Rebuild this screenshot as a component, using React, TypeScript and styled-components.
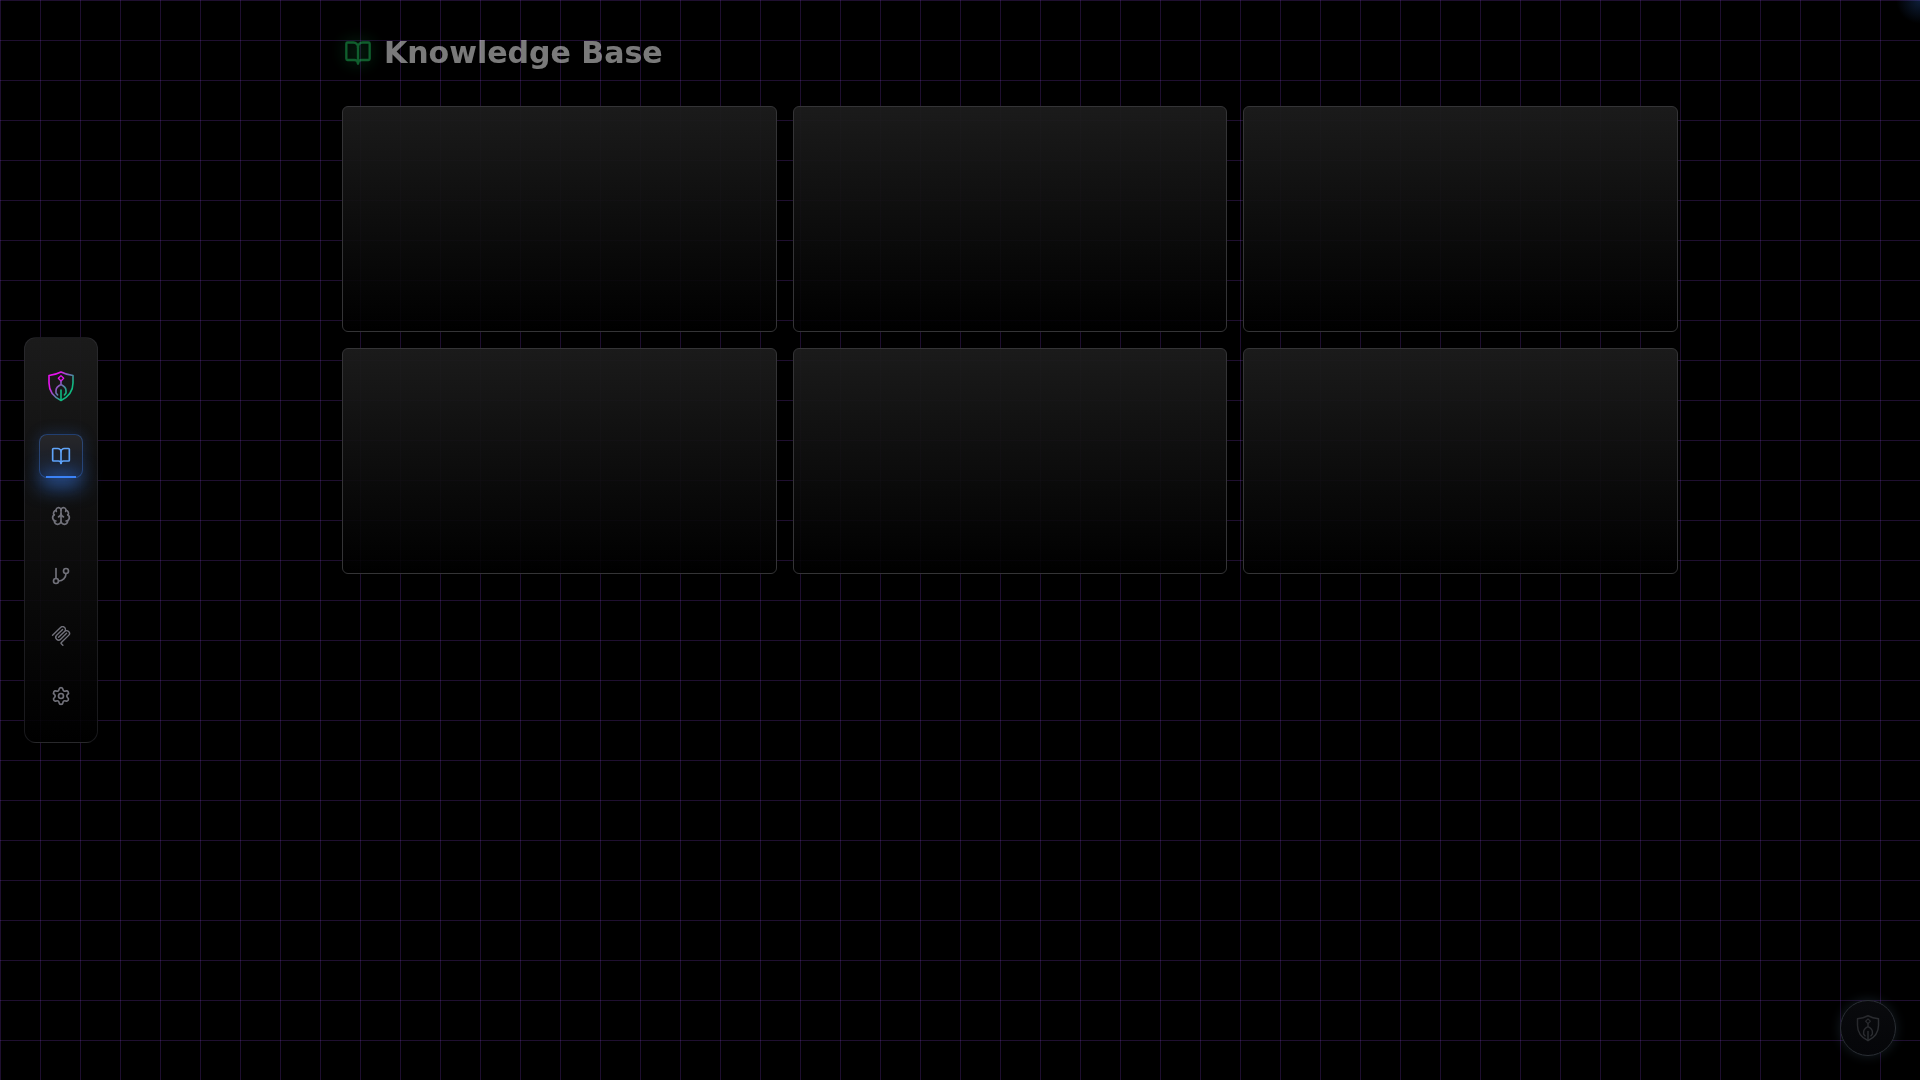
import React from 'react';
import styled, { createGlobalStyle, css } from 'styled-components';
import { BookOpen, Brain, GitBranch, Settings } from 'lucide-react';

const GlobalStyle = createGlobalStyle`
  *, *::before, *::after { box-sizing: border-box; }
  body {
    margin: 0;
    background: #000;
    font-family: "DejaVu Sans", sans-serif;
  }
`;

const Page = styled.div`
  position: relative;
  min-height: 100vh;
  padding-left: 100px;
  overflow: hidden;
  background-color: #000;
  background-image:
    linear-gradient(to right, rgba(155, 75, 240, 0.2) 1px, transparent 1px),
    linear-gradient(to bottom, rgba(155, 75, 240, 0.2) 1px, transparent 1px);
  background-size: 40px 40px;
`;

const CornerGlow = styled.div`
  position: absolute;
  top: -24px;
  right: -24px;
  width: 48px;
  height: 48px;
  background: radial-gradient(circle, rgba(59, 130, 246, 0.24), transparent 70%);
`;

const Sidebar = styled.nav`
  position: fixed;
  top: 50%;
  left: 24px;
  transform: translateY(-50%);
  display: flex;
  flex-direction: column;
  align-items: center;
  gap: 24px;
  padding: 24px 12px;
  border: 1px solid rgba(63, 63, 70, 0.4);
  border-radius: 12px;
  background: linear-gradient(to bottom, rgba(28, 28, 28, 0.95), rgba(0, 0, 0, 0.85));
`;

const LogoLink = styled.a`
  display: flex;
  padding: 8px;
`;

const NavList = styled.div`
  display: flex;
  flex-direction: column;
  gap: 16px;
`;

const NavButton = styled.button<{ $active?: boolean }>`
  position: relative;
  display: flex;
  align-items: center;
  justify-content: center;
  width: 44px;
  height: 44px;
  padding: 0;
  border: 1px solid transparent;
  border-radius: 8px;
  background: none;
  color: #71717a;
  cursor: pointer;
  ${({ $active }) =>
    $active &&
    css`
      color: #60a5fa;
      border-color: rgba(59, 130, 246, 0.36);
      background: linear-gradient(to bottom, #27272a, #141a26);
      box-shadow: 0 0 15px rgba(59, 130, 246, 0.24);
      &::before {
        content: "";
        position: absolute;
        inset: auto 6px -1px;
        height: 2px;
        background: #3b82f6;
        box-shadow: 0 3px 20px 5px rgba(59, 130, 246, 0.75);
      }
    `}
`;

const Main = styled.main`
  max-width: 1400px;
  margin: 0 auto;
  padding: 32px;
`;

const Heading = styled.h1`
  display: flex;
  align-items: center;
  gap: 12px;
  margin: 0 0 32px;
  padding-left: 2px;
  font-size: 30px;
  line-height: 42px;
  font-weight: 700;
  color: #fff;
  opacity: 0.48;
`;

const HeadingIcon = styled(BookOpen)`
  color: #22c55e;
  filter: drop-shadow(0 0 8px rgba(34, 197, 94, 0.8));
`;

const CardGrid = styled.div`
  display: grid;
  grid-template-columns: repeat(3, 1fr);
  gap: 16px;
`;

const Card = styled.article`
  height: 226px;
  border: 1px solid #343436;
  border-radius: 6px;
  background: linear-gradient(to bottom, rgba(28, 28, 28, 0.95), rgba(0, 0, 0, 0.86));
`;

const ChatButton = styled.button`
  position: fixed;
  right: 24px;
  bottom: 24px;
  display: flex;
  align-items: center;
  justify-content: center;
  width: 56px;
  height: 56px;
  padding: 0;
  border: 1px solid #2a2f35;
  border-radius: 50%;
  background: linear-gradient(to bottom, #090a0d, #050609);
  box-shadow: 0 0 12px rgba(80, 110, 140, 0.25);
  cursor: pointer;
`;

type LogoProps = { size: number; from: string; to: string; id: string };

const Logo = ({ size, from, to, id }: LogoProps) => (
  <svg width={size} height={size} viewBox="0 0 32 32" fill="none" stroke={`url(#${id})`}
    strokeWidth="1.6" strokeLinecap="round" strokeLinejoin="round" aria-hidden="true">
    <defs>
      <linearGradient id={id} gradientUnits="userSpaceOnUse" x1="9" y1="10" x2="23" y2="20">
        <stop stopColor={from} />
        <stop offset="1" stopColor={to} />
      </linearGradient>
    </defs>
    <path d="M16 2 C12 4 8 5 4 5.5 V13 C4 21 9 27 16 30.5 C23 27 28 21 28 13 V5.5 C24 5 20 4 16 2Z" />
    <path stroke={from} strokeWidth="1.3" d="M16 5.6 L18.7 8.3 L16 11 L13.3 8.3Z" />
    <path d="M16 11 V14.5 C13 16 11 18 11 20.5 V23 L12.6 25 M16 14.5 C19 16 21 18 21 20.5 V23 L19.4 25" />
    <path stroke={to} d="M16 20 V30" />
  </svg>
);

const McpIcon = () => (
  <svg width="20" height="20" viewBox="0 0 24 24" fill="currentColor" aria-hidden="true">
    <path d="M15.688 2.343a2.588 2.588 0 00-3.61 0l-9.626 9.44a.863.863 0 01-1.203 0 .823.823 0 010-1.18l9.626-9.44a4.313 4.313 0 016.016 0 4.116 4.116 0 011.204 3.54 4.3 4.3 0 013.609 1.18l.05.05a4.115 4.115 0 010 5.9l-8.706 8.537a.274.274 0 000 .393l1.788 1.754a.823.823 0 010 1.18.863.863 0 01-1.203 0l-1.788-1.753a1.92 1.92 0 010-2.754l8.706-8.538a2.47 2.47 0 000-3.54l-.05-.049a2.588 2.588 0 00-3.607-.003l-7.172 7.034-.002.002-.098.097a.863.863 0 01-1.204 0 .823.823 0 010-1.18l7.273-7.133a2.47 2.47 0 00-.003-3.537z" />
    <path d="M14.485 4.703a.823.823 0 000-1.18.863.863 0 00-1.204 0l-7.119 6.982a4.115 4.115 0 000 5.9 4.314 4.314 0 006.016 0l7.12-6.982a.823.823 0 000-1.18.863.863 0 00-1.204 0l-7.119 6.982a2.588 2.588 0 01-3.61 0 2.47 2.47 0 010-3.54l7.12-6.982z" />
  </svg>
);

const navItems = [
  { label: 'Knowledge Base', icon: <BookOpen size={20} />, active: true },
  { label: 'Agents', icon: <Brain size={20} /> },
  { label: 'Workflows', icon: <GitBranch size={20} /> },
  { label: 'MCP Server', icon: <McpIcon /> },
  { label: 'Settings', icon: <Settings size={20} /> },
];

export default function App() {
  return (
    <>
      <GlobalStyle />
      <Page>
        <CornerGlow />
        <Sidebar aria-label="Main">
          <LogoLink href="#" aria-label="Home">
            <Logo size={32} from="#e813f0" to="#10b981" id="logo-color" />
          </LogoLink>
          <NavList>
            {navItems.map(({ label, icon, active }) => (
              <NavButton key={label} type="button" aria-label={label} $active={active}>
                {icon}
              </NavButton>
            ))}
          </NavList>
        </Sidebar>
        <Main>
          <Heading>
            <HeadingIcon size={28} />
            Knowledge Base
          </Heading>
          <CardGrid>
            {Array.from({ length: 6 }, (_, i) => (
              <Card key={i} />
            ))}
          </CardGrid>
        </Main>
        <ChatButton type="button" aria-label="Open assistant">
          <Logo size={28} from="#28292d" to="#2c2e32" id="logo-muted" />
        </ChatButton>
      </Page>
    </>
  );
}
